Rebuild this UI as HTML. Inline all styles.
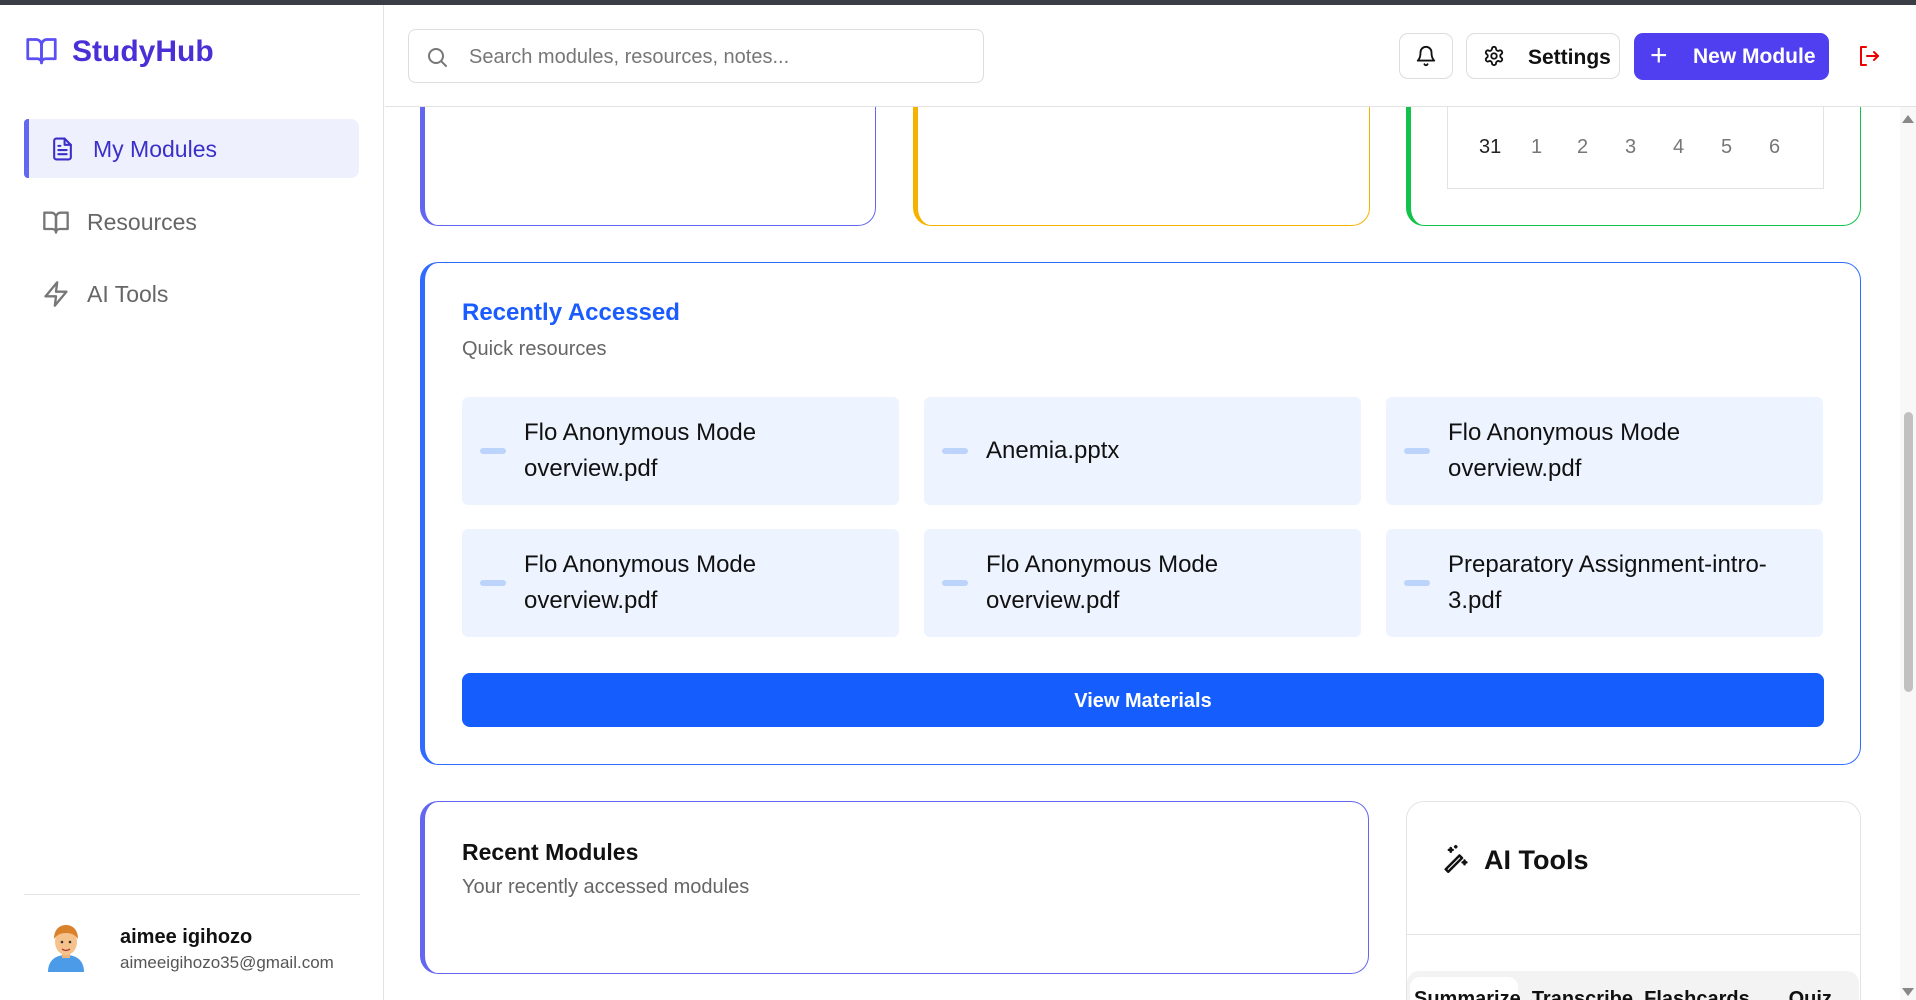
<!DOCTYPE html>
<html><head><meta charset="utf-8"><style>
*{box-sizing:border-box;margin:0;padding:0}
html,body{width:1916px;height:1000px;overflow:hidden}
body{background:#fff;font-family:"Liberation Sans",sans-serif;color:#111}
#w{position:relative;width:1916px;height:1000px;overflow:hidden}
.a{position:absolute}
.topbar{left:0;top:0;width:1916px;height:5px;background:#3a3d45}
.side{left:0;top:5px;width:384px;height:995px;border-right:1px solid #e3e3e3;background:#fff}
.main{left:385px;top:107px;width:1515px;height:893px;background:#fff}
.hdr{left:385px;top:5px;width:1531px;height:102px;border-bottom:1px solid #e3e3e3;background:#fff}
.card{position:absolute;background:#fff;border-radius:18px}
.item{position:absolute;background:#eef4ff;border-radius:6px;width:437px;height:108px}
.item .d{position:absolute;left:18px;top:51px;width:26px;height:6px;border-radius:3px;background:#bcd3fb}
.item .t{position:absolute;left:62px;top:50%;transform:translateY(-50%);font-size:24px;line-height:36px;color:#111}
.nav{position:absolute;left:24px;width:335px;height:59px;font-size:23px;color:#666}
</style></head><body><div id="w">
<div class="a topbar"></div>
<div class="a main"></div>

<div class="card" style="left:420px;top:60px;width:456px;height:166px;border:1px solid #6366f1;border-left:5px solid #6366f1"></div>
<div class="card" style="left:913px;top:60px;width:457px;height:166px;border:1px solid #f5b300;border-left:5px solid #f5b300"></div>
<div class="card" style="left:1406px;top:60px;width:455px;height:166px;border:1px solid #12c24a;border-left:5px solid #12c24a"></div>
<div class="a" style="left:1447px;top:60px;width:377px;height:129px;border:1px solid #e3e3e3;border-top:none"></div>
<div class="a" style="left:1447px;top:136px;width:377px;font-size:20px;color:#777">
<span class="a" style="left:32px;color:#222">31</span><span class="a" style="left:84px">1</span><span class="a" style="left:130px">2</span><span class="a" style="left:178px">3</span><span class="a" style="left:226px">4</span><span class="a" style="left:274px">5</span><span class="a" style="left:322px">6</span></div>

<div class="a hdr"></div>
<div class="a" style="left:408px;top:29px;width:576px;height:54px;border:1px solid #ddd;border-radius:8px;background:#fff">
<svg class="a" style="left:16px;top:15px" width="24" height="24" viewBox="0 0 24 24" fill="none" stroke="#777" stroke-width="2" stroke-linecap="round"><circle cx="11" cy="11" r="7"/><path d="M21 21l-4.3-4.3"/></svg>
<span class="a" style="left:60px;top:16px;font-size:20px;color:#777">Search modules, resources, notes...</span></div>
<div class="a" style="left:1399px;top:33px;width:54px;height:46px;border:1px solid #ddd;border-radius:9px">
<svg class="a" style="left:15px;top:11px" width="22" height="22" viewBox="0 0 24 24" fill="none" stroke="#111" stroke-width="2" stroke-linecap="round" stroke-linejoin="round"><path d="M6 8a6 6 0 0 1 12 0c0 7 3 9 3 9H3s3-2 3-9"/><path d="M10.3 21a1.9 1.9 0 0 0 3.4 0"/></svg></div>
<div class="a" style="left:1466px;top:33px;width:154px;height:46px;border:1px solid #ddd;border-radius:9px">
<svg class="a" style="left:16px;top:11px" width="22" height="22" viewBox="0 0 24 24" fill="none" stroke="#111" stroke-width="2" stroke-linecap="round" stroke-linejoin="round"><path d="M12.2 2h-.4a2 2 0 0 0-2 2v.2a2 2 0 0 1-1 1.7l-.4.3a2 2 0 0 1-2 0l-.2-.1a2 2 0 0 0-2.7.7l-.2.4a2 2 0 0 0 .7 2.7l.2.1a2 2 0 0 1 1 1.7v.5a2 2 0 0 1-1 1.7l-.2.1a2 2 0 0 0-.7 2.7l.2.4a2 2 0 0 0 2.7.7l.2-.1a2 2 0 0 1 2 0l.4.3a2 2 0 0 1 1 1.7v.2a2 2 0 0 0 2 2h.4a2 2 0 0 0 2-2v-.2a2 2 0 0 1 1-1.7l.4-.3a2 2 0 0 1 2 0l.2.1a2 2 0 0 0 2.7-.7l.2-.4a2 2 0 0 0-.7-2.7l-.2-.1a2 2 0 0 1-1-1.7v-.5a2 2 0 0 1 1-1.7l.2-.1a2 2 0 0 0 .7-2.7l-.2-.4a2 2 0 0 0-2.7-.7l-.2.1a2 2 0 0 1-2 0l-.4-.3a2 2 0 0 1-1-1.7V4a2 2 0 0 0-2-2z"/><circle cx="12" cy="12" r="3"/></svg>
<span class="a" style="left:61px;top:12px;font-size:21px;font-weight:bold;color:#111">Settings</span></div>
<div class="a" style="left:1634px;top:33px;width:195px;height:47px;border-radius:9px;background:#4f3ff0;color:#fff">
<span class="a" style="left:16px;top:6px;font-size:30px;font-weight:300">+</span>
<span class="a" style="left:59px;top:12px;font-size:21px;font-weight:bold">New Module</span></div>
<svg class="a" style="left:1857px;top:44px" width="24" height="24" viewBox="0 0 24 24" fill="none" stroke="#e00" stroke-width="2" stroke-linecap="round" stroke-linejoin="round"><path d="M9 3H4v18h5"/><path d="M10 12h11"/><path d="M17 8l4 4-4 4"/></svg>

<div class="a side"></div>
<svg class="a" style="left:24px;top:34px" width="35" height="33" viewBox="0 0 24 24" fill="none" stroke="#5b4ff5" stroke-width="2" stroke-linejoin="round"><path d="M2 4h6a4 4 0 0 1 4 4v13a3 3 0 0 0-3-3H2z"/><path d="M22 4h-6a4 4 0 0 0-4 4v13a3 3 0 0 1 3-3h7z"/></svg>
<div class="a" style="left:72px;top:35px;font-size:30px;font-weight:bold;color:#4a2fd6">StudyHub</div>
<div class="nav" style="top:119px;background:#eef1fd;border-left:5px solid #6366f1;border-radius:4px 8px 8px 4px;color:#3b2fc9">
<svg class="a" style="left:21px;top:16px" width="25" height="28" viewBox="0 0 24 24" fill="none" stroke="#3b2fc9" stroke-width="2" stroke-linejoin="round" stroke-linecap="round"><path d="M14 2H6a2 2 0 0 0-2 2v16a2 2 0 0 0 2 2h12a2 2 0 0 0 2-2V8z"/><path d="M14 2v6h6M16 13H8M16 17H8M10 9H8"/></svg>
<span class="a" style="left:64px;top:17px">My Modules</span></div>
<div class="nav" style="top:193px">
<svg class="a" style="left:18px;top:15px" width="28" height="28" viewBox="0 0 24 24" fill="none" stroke="#777" stroke-width="2" stroke-linejoin="round"><path d="M2 4h6a4 4 0 0 1 4 4v13a3 3 0 0 0-3-3H2z"/><path d="M22 4h-6a4 4 0 0 0-4 4v13a3 3 0 0 1 3-3h7z"/></svg>
<span class="a" style="left:63px;top:16px">Resources</span></div>
<div class="nav" style="top:265px">
<svg class="a" style="left:18px;top:15px" width="28" height="28" viewBox="0 0 24 24" fill="none" stroke="#777" stroke-width="2" stroke-linejoin="round"><path d="M13 2L3 14h9l-1 8 10-12h-9z"/></svg>
<span class="a" style="left:63px;top:16px">AI Tools</span></div>
<div class="a" style="left:24px;top:894px;width:336px;height:1px;background:#e3e3e3"></div>
<svg class="a" style="left:44px;top:920px" width="44" height="52" viewBox="0 0 44 52"><path d="M4 52c0-12 8-17 18-17s18 5 18 17z" fill="#4b9be8"/><rect x="18" y="30" width="8" height="8" fill="#f0b47a"/><ellipse cx="22" cy="22" rx="11" ry="13" fill="#f5c28c"/><path d="M10 19c0-10 6-14 12-14s12 4 12 14c-3-4-6-6-12-6s-9 2-12 6z" fill="#d9822b"/><circle cx="18" cy="22" r="1.3" fill="#333"/><circle cx="26" cy="22" r="1.3" fill="#333"/><path d="M18 29q4 3 8 0" stroke="#a33" stroke-width="1.3" fill="none"/></svg>
<div class="a" style="left:120px;top:926px;font-size:20px;font-weight:bold;color:#111">aimee igihozo</div>
<div class="a" style="left:120px;top:953px;font-size:17px;color:#555">aimeeigihozo35@gmail.com</div>

<div class="card" style="left:420px;top:262px;width:1441px;height:503px;border:1.5px solid #2f6bff;border-left:5px solid #2f6bff"></div>
<div class="a" style="left:462px;top:299px;font-size:24px;font-weight:bold;color:#1a5cff">Recently Accessed</div>
<div class="a" style="left:462px;top:338px;font-size:20px;color:#666">Quick resources</div>
<div class="item" style="left:462px;top:397px"><div class="d"></div><div class="t">Flo Anonymous Mode<br>overview.pdf</div></div>
<div class="item" style="left:924px;top:397px"><div class="d"></div><div class="t">Anemia.pptx</div></div>
<div class="item" style="left:1386px;top:397px"><div class="d"></div><div class="t">Flo Anonymous Mode<br>overview.pdf</div></div>
<div class="item" style="left:462px;top:529px"><div class="d"></div><div class="t">Flo Anonymous Mode<br>overview.pdf</div></div>
<div class="item" style="left:924px;top:529px"><div class="d"></div><div class="t">Flo Anonymous Mode<br>overview.pdf</div></div>
<div class="item" style="left:1386px;top:529px"><div class="d"></div><div class="t">Preparatory Assignment-intro-<br>3.pdf</div></div>
<div class="a" style="left:462px;top:673px;width:1362px;height:54px;background:#155dfc;border-radius:8px;color:#fff;font-size:20px;font-weight:bold;text-align:center;line-height:56px">View Materials</div>

<div class="card" style="left:420px;top:801px;width:949px;height:173px;border:1px solid #6366f1;border-left:5px solid #6366f1"></div>
<div class="a" style="left:462px;top:839px;font-size:23px;font-weight:bold;color:#111">Recent Modules</div>
<div class="a" style="left:462px;top:876px;font-size:20px;color:#666">Your recently accessed modules</div>

<div class="card" style="left:1406px;top:801px;width:455px;height:230px;border:1px solid #e3e3e3"></div>
<svg class="a" style="left:1442px;top:843px" width="30" height="30" viewBox="0 0 24 24" fill="none" stroke="#111" stroke-width="2" stroke-linecap="round" stroke-linejoin="round"><path d="M3 21l11-11 2 2-11 11z"/><path d="M7 4v3M5.5 5.5h3M18 14v3M16.5 15.5h3M11 2.5v1M10.5 3h1"/></svg>
<div class="a" style="left:1484px;top:845px;font-size:27px;font-weight:bold;color:#111">AI Tools</div>
<div class="a" style="left:1407px;top:934px;width:453px;height:1px;background:#e3e3e3"></div>
<div class="a" style="left:1407px;top:971px;width:452px;height:40px;background:#f3f3f3;border-radius:12px 12px 0 0"></div>
<div class="a" style="left:1410px;top:977px;width:108px;height:40px;background:#fff;border-radius:10px 10px 0 0"></div>
<div class="a" style="left:1414px;top:988px;font-size:20px;font-weight:bold;color:#111;white-space:nowrap">Summarize&nbsp; Transcribe&nbsp; Flashcards&nbsp;&nbsp;&nbsp;&nbsp;&nbsp;&nbsp; Quiz</div>

<div class="a" style="left:1900px;top:107px;width:16px;height:893px;background:#f8f8f8"></div>
<div class="a" style="left:1904px;top:412px;width:9px;height:280px;background:#c1c1c1;border-radius:5px"></div>
<div class="a" style="left:1902px;top:115px;width:0;height:0;border-left:6px solid transparent;border-right:6px solid transparent;border-bottom:8px solid #888"></div>
<div class="a" style="left:1902px;top:988px;width:0;height:0;border-left:6px solid transparent;border-right:6px solid transparent;border-top:8px solid #888"></div>
</div></body></html>
